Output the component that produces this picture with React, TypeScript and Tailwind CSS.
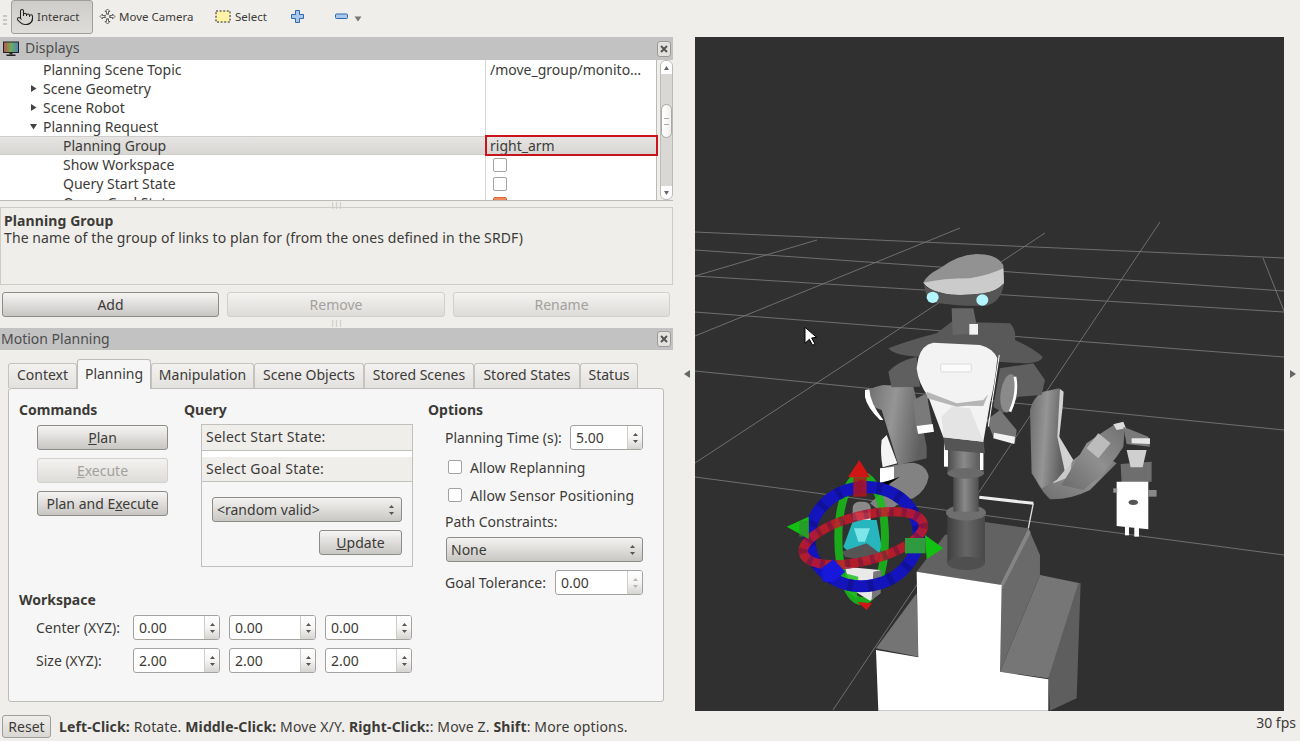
import React from "react";
import { Pointer } from "lucide-react";

const font = { fontFamily: '"Noto Sans", "Liberation Sans", sans-serif' };

function Arrows({ dim }: { dim?: boolean }) {
  const c = dim ? "#b5b5b5" : "#555";
  return (
    <svg width="7" height="12" viewBox="0 0 7 12" className="shrink-0">
      <polygon points="3.5,1 6,4 1,4" fill={c} />
      <polygon points="1,8 6,8 3.5,11" fill={c} />
    </svg>
  );
}

function Btn({ w, disabled, children }: { w: string; disabled?: boolean; children: React.ReactNode }) {
  return (
    <div
      className={`${w} h-[25px] rounded-[3px] border flex items-center justify-center text-[14px] shrink-0 ${
        disabled
          ? "border-[#d2d0cc] text-[#a3a19d] bg-gradient-to-b from-[#f4f3f1] to-[#dedcd9]"
          : "border-[#8d8c89] text-[#3c3b37] bg-gradient-to-b from-[#f6f5f4] to-[#c8c6c3]"
      }`}
    >
      {children}
    </div>
  );
}

function Spin({ w, v, dim }: { w: string; v: string; dim?: boolean }) {
  return (
    <div className={`${w} h-[25px] rounded-[3px] border border-[#a5a3a0] bg-white flex overflow-hidden shrink-0`}>
      <div className="flex-1 pl-[5px] text-[14px] leading-[23px] text-[#3c3b37]">{v}</div>
      <div className="w-[15px] border-l border-[#d0cecb] bg-gradient-to-b from-white via-[#f6f5f4] to-[#d6d4d1] flex items-center justify-center">
        <Arrows dim={dim} />
      </div>
    </div>
  );
}

function Combo({ w, v }: { w: string; v: string }) {
  return (
    <div className={`${w} h-[25px] rounded-[3px] border border-[#8d8c89] bg-gradient-to-b from-[#f4f3f1] to-[#c9c7c4] flex items-center justify-between pl-[4px] pr-[6px] text-[14px] text-[#3c3b37] shrink-0`}>
      <span>{v}</span>
      <Arrows />
    </div>
  );
}

function Check() {
  return <div className="w-[14px] h-[14px] rounded-[2px] border border-[#a5a3a0] bg-white shrink-0" />;
}

function Tri({ open }: { open?: boolean }) {
  return (
    <svg width="9" height="9" viewBox="0 0 9 9" className="shrink-0">
      {open ? <polygon points="1,2 8,2 4.5,7.5" fill="#444" /> : <polygon points="2,1 7.5,4.5 2,8" fill="#444" />}
    </svg>
  );
}

function CloseBtn() {
  return (
    <div className="w-[14px] h-[16px] rounded-[3px] border border-[#9c9a97] bg-[#e4e2df] flex items-center justify-center shrink-0">
      <svg width="8" height="8" viewBox="0 0 8 8">
        <path d="M1 1 L7 7 M7 1 L1 7" stroke="#555" strokeWidth="2" />
      </svg>
    </div>
  );
}

function Grip() {
  return <div className="flex justify-center text-[7px] leading-[7px] text-[#a9a7a3] tracking-[0px]">|||</div>;
}

const rows: { t: string; indent: string; tri?: "open" | "closed"; v?: React.ReactNode; sel?: boolean }[] = [
  { t: "Planning Scene Topic", indent: "pl-[43px]", v: "/move_group/monito…" },
  { t: "Scene Geometry", indent: "pl-[29px]", tri: "closed" },
  { t: "Scene Robot", indent: "pl-[29px]", tri: "closed" },
  { t: "Planning Request", indent: "pl-[29px]", tri: "open" },
  { t: "Planning Group", indent: "pl-[63px]", v: "right_arm", sel: true },
  { t: "Show Workspace", indent: "pl-[63px]", v: <Check /> },
  { t: "Query Start State", indent: "pl-[63px]", v: <Check /> },
  {
    t: "Query Goal State",
    indent: "pl-[63px]",
    v: (
      <div className="w-[14px] h-[14px] rounded-[2px] border border-[#d9663a] bg-[#f08a5d] shrink-0 mt-[2px]" />
    ),
  },
];

function Tree() {
  return (
    <div className="h-[141px] flex border-b border-[#bdbbb7] shrink-0 relative">
      <div className="w-[657px] h-[140px] bg-white border-r border-[#bdbbb7] overflow-hidden shrink-0">
        {rows.map((r) => (
          <div
            key={r.t}
            className={`h-[19px] flex text-[14px] leading-[19px] text-[#3c3b37] ${
              r.sel ? "bg-gradient-to-b from-[#e6e5e3] to-[#d8d6d3] border-y border-[#cfcdc9]" : ""
            }`}
          >
            <div className={`w-[486px] shrink-0 flex items-center border-r border-[#d6d6d6] ${r.indent}`}>
              {r.tri && (
                <span className="mr-[5px]">
                  <Tri open={r.tri === "open"} />
                </span>
              )}
              <span>{r.t}</span>
            </div>
            <div className={`flex-1 flex items-center ${typeof r.v === "string" ? "pl-[4px]" : "pl-[7px]"}`}>
              {r.v}
            </div>
          </div>
        ))}
      </div>
      <div className="absolute left-[485px] top-[75px] w-[173px] h-[21px] border-2 border-[#c9131d]" />
      <div className="w-[13px] ml-[3px] h-[140px] rounded-[6px] border border-[#bdbbb7] bg-[#dad8d5] flex flex-col items-center overflow-hidden shrink-0">
        <div className="h-[13px] w-full bg-white flex items-center justify-center shrink-0">
          <svg width="5" height="4" viewBox="0 0 5 4"><polygon points="2.5,0 5,4 0,4" fill="#666" /></svg>
        </div>
        <div className="h-[30px] shrink-0" />
        <div className="h-[34px] w-full rounded-[6px] border border-[#aaa8a5] bg-gradient-to-r from-white to-[#f0efed] shrink-0 flex items-center justify-center">
          <div className="w-[5px] h-[7px] border-y border-[#aaa] " />
        </div>
        <div className="flex-1" />
        <div className="h-[13px] w-full bg-white flex items-center justify-center shrink-0">
          <svg width="5" height="4" viewBox="0 0 5 4"><polygon points="0,0 5,0 2.5,4" fill="#666" /></svg>
        </div>
      </div>
    </div>
  );
}

function Tabs() {
  const tabs: [string, string][] = [
    ["Context", "w-[69px]"],
    ["Manipulation", "w-[103px]"],
    ["Scene Objects", "w-[110px]"],
    ["Stored Scenes", "w-[110px]"],
    ["Stored States", "w-[106px]"],
    ["Status", "w-[58px]"],
  ];
  const tab = (t: string, w: string) => (
    <div
      key={t}
      className={`${w} h-[25px] rounded-t-[3px] border border-b-0 border-[#c5c3bf] bg-gradient-to-b from-[#f3f2f0] to-[#e3e1de] flex items-center justify-center text-[14px] pb-[3px] text-[#3c3b37] shrink-0`}
    >
      {t}
    </div>
  );
  return (
    <div className="h-[29px] pl-[8px] flex items-end shrink-0 relative z-10">
      {tab(tabs[0][0], tabs[0][1])}
      <div className="w-[74px] h-[30px] -mb-[1px] rounded-t-[3px] border border-b-0 border-[#bdbbb7] bg-[#f6f6f6] flex items-center justify-center text-[14px] pb-[2px] text-[#3c3b37] shrink-0">
        Planning
      </div>
      {tabs.slice(1).map(([t, w]) => tab(t, w))}
    </div>
  );
}

function Heading({ children }: { children: React.ReactNode }) {
  return <div className="text-[14px] font-bold leading-[19px] text-[#3c3b37]">{children}</div>;
}

function Commands() {
  return (
    <div className="w-[165px] shrink-0 flex flex-col">
      <Heading>Commands</Heading>
      <div className="pl-[18px] pt-[6px] flex flex-col gap-[8px]">
        <Btn w="w-[131px]"><span><u>P</u>lan</span></Btn>
        <Btn w="w-[131px]" disabled><span><u>E</u>xecute</span></Btn>
        <Btn w="w-[131px]"><span>Plan and E<u>x</u>ecute</span></Btn>
      </div>
    </div>
  );
}

function Query() {
  return (
    <div className="w-[244px] shrink-0 flex flex-col">
      <Heading>Query</Heading>
      <div className="ml-[17px] mt-[5px] w-[212px] h-[143px] border border-[#c2c0bc] flex flex-col">
        <div className="h-[26px] border-b border-[#c2c0bc] bg-[#f0eeeb] pl-[4px] text-[14px] tracking-[0.25px] leading-[24px] text-[#3c3b37] shrink-0">Select Start State:</div>
        <div className="h-[6px] bg-white shrink-0" />
        <div className="h-[25px] border-b border-[#c2c0bc] bg-[#f0eeeb] pl-[4px] text-[14px] tracking-[0.25px] leading-[24px] text-[#3c3b37] shrink-0">Select Goal State:</div>
        <div className="pl-[10px] pt-[15px] flex flex-col gap-[8px]">
          <Combo w="w-[190px]" v="<random valid>" />
          <div className="flex justify-end w-[190px]">
            <Btn w="w-[83px]"><span><u>U</u>pdate</span></Btn>
          </div>
        </div>
      </div>
    </div>
  );
}

function Options() {
  const label = "text-[14px] text-[#3c3b37]";
  return (
    <div className="flex-1 flex flex-col">
      <Heading>Options</Heading>
      <div className="pl-[17px] flex flex-col">
        <div className="flex items-center justify-between w-[198px] mt-[6px]">
          <span className={label}>Planning Time (s):</span>
          <Spin w="w-[73px]" v="5.00" />
        </div>
        <div className="flex items-center gap-[8px] pl-[3px] mt-[7px] h-[20px]">
          <Check />
          <span className={`${label} tracking-[0.1px]`}>Allow Replanning</span>
        </div>
        <div className="flex items-center gap-[8px] pl-[3px] mt-[8px] h-[20px]">
          <Check />
          <span className={`${label} tracking-[0.1px]`}>Allow Sensor Positioning</span>
        </div>
        <div className={`${label} mt-[7px] leading-[20px]`}>Path Constraints:</div>
        <div className="mt-[5px]">
          <div className="w-[198px] ml-[1px]"><Combo w="w-[197px]" v="None" /></div>
        </div>
        <div className="flex items-center justify-between w-[198px] mt-[8px]">
          <span className={label}>Goal Tolerance:</span>
          <Spin w="w-[88px]" v="0.00" dim />
        </div>
      </div>
    </div>
  );
}

function Workspace() {
  const row = (t: string, v: string, mt: string) => (
    <div className={`flex items-center ${mt}`}>
      <div className="w-[114px] pl-[17px] text-[14px] text-[#3c3b37] shrink-0 whitespace-nowrap">{t}</div>
      <div className="flex gap-[9px]">
        <Spin w="w-[87px]" v={v} />
        <Spin w="w-[87px]" v={v} />
        <Spin w="w-[87px]" v={v} />
      </div>
    </div>
  );
  return (
    <div className="flex flex-col">
      <Heading>Workspace</Heading>
      {row("Center (XYZ):", "0.00", "mt-[6px]")}
      {row("Size (XYZ):", "2.00", "mt-[8px]")}
    </div>
  );
}

function Cylinder({ x, y, w, h, id }: { x: number; y: number; w: number; h: number; id: string }) {
  return <rect x={x} y={y} width={w} height={h} fill={`url(#${id})`} />;
}

function Scene() {
  const grid = [
    "695,232 1284,258",
    "695,250 1284,291",
    "695,276 1284,312",
    "695,312 1284,357",
    "695,371 1284,430",
    "695,477 1284,555",
    "695,276 817,240",
    "695,336 960,228",
    "695,463 1045,233",
    "833,710 1160,222",
    "1263,258 1284,311",
  ];
  return (
    <svg width="589" height="674" viewBox="695 37 589 674" className="block">
      <defs>
        <linearGradient id="cyl" x1="0" x2="1" y1="0" y2="0">
          <stop offset="0" stopColor="#4a4a4a" />
          <stop offset="0.45" stopColor="#8a8a8a" />
          <stop offset="1" stopColor="#4f4f4f" />
        </linearGradient>
        <linearGradient id="cyld" x1="0" x2="1" y1="0" y2="0">
          <stop offset="0" stopColor="#3e3e3e" />
          <stop offset="0.5" stopColor="#666" />
          <stop offset="1" stopColor="#484848" />
        </linearGradient>
        <linearGradient id="arm" x1="0" x2="1" y1="0" y2="0.2">
          <stop offset="0" stopColor="#6c6c6c" />
          <stop offset="0.5" stopColor="#959595" />
          <stop offset="1" stopColor="#5f5f5f" />
        </linearGradient>
        <linearGradient id="fore" x1="0" x2="1" y1="1" y2="0">
          <stop offset="0" stopColor="#6a6a6a" />
          <stop offset="0.5" stopColor="#8f8f8f" />
          <stop offset="1" stopColor="#707070" />
        </linearGradient>
      </defs>
      <rect x="695" y="37" width="589" height="674" fill="#303030" />
      {grid.map((g) => {
        const [a, b] = g.split(" ");
        const [x1, y1] = a.split(",");
        const [x2, y2] = b.split(",");
        return <line key={g} x1={x1} y1={y1} x2={x2} y2={y2} stroke="#767676" strokeWidth="0.9" />;
      })}

      {/* lower half: base, column, gripper, marker */}
      <g transform="translate(770 440) scale(0.3333)">
        <polygon points="810,405 930,430 925,530 835,715 690,695" fill="#767676" />
        <polygon points="925,430 932,430 920,775 840,812 835,715" fill="#5e5e5e" />
        <polygon points="690,435 775,265 810,345 810,405 690,695" fill="#6a6a6a" />
        <polygon points="440,395 525,285 640,245 775,265 690,435" fill="#626262" />
        <polygon points="690,435 775,265 782,278 697,445" fill="#858585" />
        <polygon points="318,625 440,460 445,650" fill="#747474" />
        <polygon points="440,395 695,435 690,695 835,718 835,812 325,812 318,630 445,652" fill="#ffffff" />
        <line x1="628" y1="172" x2="790" y2="190" stroke="#eee" strokeWidth="9" />
        <line x1="790" y1="190" x2="775" y2="265" stroke="#ddd" strokeWidth="4" />
        <Cylinder x={532} y={220} w={113} h={150} id="cyld" />
        <ellipse cx="588" cy="370" rx="56" ry="20" fill="#4f4f4f" />
        <ellipse cx="588" cy="218" rx="60" ry="24" fill="#6f6f6f" />
        <Cylinder x={550} y={100} w={76} h={115} id="cyl" />
        <Cylinder x={532} y={-10} w={110} h={110} id="cyl" />
        <ellipse cx="587" cy="100" rx="55" ry="16" fill="#6a6a6a" />
        <rect x="522" y="10" width="12" height="70" fill="#fff" />
        <rect x="630" y="15" width="10" height="75" fill="#fff" />

        {/* right elbow and forearm */}
        <path d="M785 85 Q790 60 820 50 L790 0 L870 0 L910 60 L960 20 L1040 70 L960 150 Q900 180 840 178 Q800 140 785 85Z" fill="url(#fore)" />
        <polygon points="870,30 905,65 900,110 850,130" fill="#c9c9c9" />

        {/* right gripper */}
        <polygon points="1052,72 1145,65 1145,125 1055,130" fill="#6e6e6e" />
        <polygon points="1040,125 1135,125 1135,268 1040,258" fill="#ffffff" />
        <polygon points="1030,145 1042,145 1042,158 1030,158" fill="#999" />
        <polygon points="1135,150 1160,150 1160,170 1135,170" fill="#888" />
        <ellipse cx="1090" cy="187" rx="14" ry="8" fill="#555" />
        <rect x="1065" y="258" width="12" height="28" fill="#fff" />
        <rect x="1093" y="262" width="14" height="28" fill="#fff" />

        {/* left forearm */}
        <path d="M330 90 Q370 70 430 68 Q470 75 476 110 Q470 150 430 175 Q390 180 345 225 L300 190 L360 135Z" fill="#828282" />
        <polygon points="330,85 372,80 372,118 330,128" fill="#fff" />
        <polygon points="335,130 390,110 345,140" fill="#000" />

        {/* marker */}
        <polygon points="220,320 250,240 320,240 335,320 320,360 230,330" fill="#27b6be" />
        <polygon points="252,265 300,265 285,305 265,305" fill="#7fe6e8" />
        <polygon points="215,335 290,310 330,340 310,368 225,350" fill="#555" />
        <rect x="248" y="185" width="54" height="55" rx="20" fill="#8a8a8a" />
        <rect x="248" y="218" width="54" height="22" fill="#e8e8e8" />
        <ellipse cx="275" cy="295" rx="70" ry="188" fill="none" stroke="#18c018" strokeWidth="24" opacity="0.85" />
        <polygon points="225,380 330,390 330,460 300,482 240,445" fill="#e9e9e9" />
        <polygon points="310,395 335,390 332,460 305,480" fill="#777" />
        <polygon points="225,400 265,410 260,475 225,450" fill="#22c022" opacity="0.85" />
        <g transform="rotate(-12 282 290)">
          <ellipse cx="282" cy="290" rx="165" ry="148" fill="none" stroke="#1414bc" strokeWidth="36" />
          <ellipse cx="282" cy="290" rx="165" ry="148" fill="none" stroke="#0d0d80" strokeWidth="36" strokeDasharray="16 46" opacity="0.55" />
        </g>
        <g transform="rotate(-14 280 295)" opacity="0.85">
          <ellipse cx="280" cy="295" rx="185" ry="68" fill="none" stroke="#c91a2a" strokeWidth="28" />
          <ellipse cx="280" cy="295" rx="185" ry="68" fill="none" stroke="#7a1040" strokeWidth="28" strokeDasharray="14 24" opacity="0.6" />
        </g>
        <polygon points="268,60 234,112 300,112" fill="#d01515" />
        <rect x="250" y="112" width="40" height="58" fill="#b8141c" opacity="0.8" />
        <polygon points="50,260 116,230 116,296" fill="#12c012" />
        <rect x="88" y="242" width="28" height="48" fill="#2f8f2f" opacity="0.7" />
        <polygon points="520,325 465,285 470,357" fill="#12c012" />
        <rect x="405" y="294" width="62" height="46" fill="#2f9a3f" />
        <polygon points="155,385 190,358 226,395 190,426 158,425" fill="#1818dd" />
        <polygon points="262,486 306,490 290,510" fill="#d01515" />
      </g>

      {/* upper half: head, torso, arms */}
      <g transform="translate(770 240) scale(0.3333)">
        {/* arms */}
        <path d="M285 470 Q285 445 340 435 L430 440 L445 500 L470 620 L470 655 L385 675 L335 510 Q300 500 285 470Z" fill="url(#arm)" />
        <path d="M285 450 L298 448 Q300 490 340 540 L330 540 Q290 500 285 470Z" fill="#fff" />
        <path d="M335 600 L350 585 L382 670 L338 682 Q330 640 335 600Z" fill="#f4f4f4" />
        <path d="M780 510 Q790 470 820 455 L868 445 L880 480 L865 580 L885 690 L860 720 L815 745 L785 700Z" fill="url(#arm)" />
        <path d="M870 447 L881 455 L878 500 L868 590 L910 660 L885 695 L862 590Z" fill="#d2d2d2" />
        <path d="M875 735 L950 610 L1000 575 L1040 550 L1065 560 L1060 620 L1040 650 L1000 700 L940 750Z" fill="url(#fore)" />
        <polygon points="950,625 985,580 1022,610 985,655" fill="#bcbcbc" />
        <polygon points="1030,553 1060,545 1068,565 1040,570" fill="#ddd" />
        <polygon points="1060,560 1135,590 1140,620 1070,612" fill="#7a7a7a" />
        <polygon points="1085,595 1140,595 1140,612 1085,610" fill="#e6e6e6" />
        <polygon points="1070,630 1130,630 1118,682 1082,682" fill="#cfcfcf" />

        {/* shoulders */}
        <path d="M355 325 Q420 300 500 280 L545 245 L720 250 Q740 270 735 300 Q790 325 818 350 Q815 368 760 370 L440 350 Q370 345 355 325Z" fill="#595959" />
        <path d="M355 395 Q380 365 440 350 L450 440 L365 442Z" fill="#5f5f5f" />
        <path d="M690 385 L790 370 L825 420 L815 465 L745 470 L700 520 L670 500Z" fill="#5f5f5f" />
        <ellipse cx="716" cy="460" rx="24" ry="58" fill="#8a8a8a" transform="rotate(8 716 460)" />
        <path d="M735 410 Q745 460 720 515" fill="none" stroke="#fff" strokeWidth="8" />
        <polygon points="430,480 470,460 490,575 440,580" fill="#7a7a7a" />
        <polygon points="440,558 488,552 492,575 445,582" fill="#fff" />
        <polygon points="650,540 690,510 740,570 735,610 670,590" fill="#767676" />
        <polygon points="672,578 735,590 733,612 670,595" fill="#f2f2f2" />

        {/* torso */}
        <polygon points="520,590 640,600 645,640 525,630" fill="#555" />
        <path d="M445 355 Q455 315 490 308 L630 315 Q670 325 682 355 Q675 430 660 490 L640 605 L520 592 L475 470 Q445 430 440 385Z" fill="#f3f3f3" />
        <polygon points="515,530 545,500 600,505 640,605 520,592" fill="#e4e4e4" />
        <polygon points="470,455 560,490 640,480 655,462 640,498 590,497 560,500 472,475" fill="#b5b5b5" />
        <rect x="512" y="372" width="92" height="24" rx="5" fill="#fbfbfb" stroke="#cfcfcf" strokeWidth="2" />
        <line x1="688" y1="345" x2="655" y2="560" stroke="#fff" strokeWidth="3" />

        {/* neck and head */}
        <polygon points="545,205 610,205 625,280 548,285" fill="#666" />
        <rect x="598" y="252" width="26" height="32" fill="#f2f2f2" />
        <path d="M460 128 Q470 105 510 85 Q560 45 620 42 Q680 42 700 75 L702 130 Q680 155 640 160 Q560 170 520 160 Q475 150 460 128Z" fill="#929292" />
        <path d="M460 128 Q520 115 600 115 Q660 105 700 85 L702 130 Q680 155 640 160 Q560 170 520 160 Q475 150 460 128Z" fill="#cbcbcb" />
        <path d="M462 135 Q470 175 480 185 Q560 200 650 197 Q695 185 702 130 Q680 155 640 160 Q560 170 520 160 Q475 150 462 135Z" fill="#555" />
        <ellipse cx="488" cy="172" rx="18" ry="17" fill="#b2f5fc" />
        <ellipse cx="637" cy="180" rx="18" ry="17" fill="#b2f5fc" />

        {/* cursor */}
        <path d="M105 262 L105 310 L118 298 L128 316 L135 312 L125 294 L140 292 Z" fill="#fff" stroke="#000" strokeWidth="3" />
      </g>
    </svg>
  );
}

export default function App() {
  return (
    <div style={font} className="w-[1300px] h-[741px] bg-[#f0eeeb] flex flex-col overflow-hidden text-[#3c3b37]">
      {/* toolbar */}
      <div className="h-[37px] flex items-start shrink-0 text-[11.5px]">
        <div className="w-[11px] pl-[3px] pt-[15px] shrink-0">
          <div className="w-[4px] h-[2px] bg-[#c9c7c3] mb-[2px]" />
          <div className="w-[4px] h-[2px] bg-[#c9c7c3] mb-[2px]" />
          <div className="w-[4px] h-[2px] bg-[#c9c7c3]" />
        </div>
        <div className="w-[82px] h-[34px] rounded-[3px] border border-[#a09e9b] bg-gradient-to-b from-[#cfcdca] to-[#dfddda] flex items-center pl-[4px] gap-[3px] shrink-0">
          <Pointer size={18} strokeWidth={1.4} color="#222" />
          <span>Interact</span>
        </div>
        <div className="h-[33px] flex items-center pl-[6px] gap-[3px] w-[116px] shrink-0">
          <svg width="17" height="17" viewBox="0 0 17 17" fill="none" stroke="#555" strokeWidth="0.9">
            <path d="M8.5 1 L11 3.5 H9.5 V6 H7.5 V3.5 H6 Z M8.5 16 L6 13.5 H7.5 V11 H9.5 V13.5 H11 Z M1 8.5 L3.5 6 V7.5 H6 V9.5 H3.5 V11 Z M16 8.5 L13.5 11 V9.5 H11 V7.5 H13.5 V6 Z" />
            <circle cx="8.5" cy="8.5" r="2.4" strokeDasharray="1.5 1" />
          </svg>
          <span>Move Camera</span>
        </div>
        <div className="h-[33px] flex items-center gap-[4px] w-[76px] pl-[6px] shrink-0">
          <svg width="16" height="14" viewBox="0 0 16 14">
            <rect x="1" y="1" width="14" height="11" fill="#fdf2a8" stroke="#222" strokeWidth="1" strokeDasharray="2 1.6" />
          </svg>
          <span>Select</span>
        </div>
        <div className="h-[33px] flex items-center w-[42px] pl-[6px] shrink-0">
          <svg width="13" height="13" viewBox="0 0 13 13">
            <path d="M4.5 0.5 H8.5 V4.5 H12.5 V8.5 H8.5 V12.5 H4.5 V8.5 H0.5 V4.5 H4.5 Z" fill="#a9c8ec" stroke="#2f69ae" />
          </svg>
        </div>
        <div className="h-[33px] flex items-center pl-[8px] gap-[6px] shrink-0">
          <svg width="13" height="7" viewBox="0 0 13 7">
            <rect x="0.5" y="1" width="12" height="4.5" rx="1" fill="#a9c8ec" stroke="#2f69ae" />
          </svg>
          <svg width="8" height="6" viewBox="0 0 8 6" className="mt-[4px]">
            <polygon points="0.5,0.5 7.5,0.5 4,5.5" fill="#777" />
          </svg>
        </div>
      </div>

      <div className="flex flex-1 min-h-0">
        {/* left column */}
        <div className="w-[673px] shrink-0 flex flex-col">
          <div className="h-[23px] bg-[#c2c2c2] flex items-center justify-between pl-[3px] pr-[2px] shrink-0">
            <div className="flex items-center gap-[6px] text-[14px] leading-[20px] pb-[2px] text-[#4d4d4d]">
              <svg width="16" height="16" viewBox="0 0 16 16" className="mt-[2px]">
                <defs>
                  <linearGradient id="mon" x1="0" x2="1" y1="0" y2="0">
                    <stop offset="0" stopColor="#c0504d" />
                    <stop offset="0.5" stopColor="#6cae5a" />
                    <stop offset="1" stopColor="#4f81bd" />
                  </linearGradient>
                </defs>
                <rect x="0.5" y="1" width="15" height="10.5" fill="url(#mon)" stroke="#222" />
                <rect x="6.5" y="11.5" width="3" height="2" fill="#222" />
                <rect x="3.5" y="13.5" width="9" height="1.5" fill="#222" />
              </svg>
              <span>Displays</span>
            </div>
            <CloseBtn />
          </div>
          <Tree />
          <div className="h-[6px] shrink-0 flex items-center justify-center"><Grip /></div>
          <div className="h-[78px] border border-[#cfccc7] px-[3px] pt-[4px] text-[14px] leading-[17px] tracking-[0.1px] shrink-0">
            <div className="font-bold">Planning Group</div>
            <div>The name of the group of links to plan for (from the ones defined in the SRDF)</div>
          </div>
          <div className="flex gap-[8px] pl-[2px] mt-[7px] shrink-0">
            <Btn w="w-[217px]">Add</Btn>
            <Btn w="w-[218px]" disabled>Remove</Btn>
            <Btn w="w-[217px]" disabled>Rename</Btn>
          </div>
          <div className="h-[11px] shrink-0 flex items-center justify-center"><Grip /></div>
          <div className="h-[22px] bg-[#c2c2c2] flex items-center justify-between pl-[1px] pr-[2px] text-[14px] shrink-0">
            <span className="text-[#4d4d4d] pb-[2px]">Motion Planning</span>
            <CloseBtn />
          </div>
          <div className="h-[9px] shrink-0" />
          <Tabs />
          <div className="ml-[8px] w-[656px] h-[314px] rounded-[3px] border border-[#bdbbb7] bg-[#f6f6f6] pl-[10px] pt-[11px] flex flex-col shrink-0">
            <div className="flex h-[190px] shrink-0">
              <Commands />
              <Query />
              <Options />
            </div>
            <Workspace />
          </div>
        </div>
        {/* splitter */}
        <div className="w-[22px] shrink-0 flex items-center justify-center pb-[1px] pl-[6px]">
          <svg width="6" height="8" viewBox="0 0 6 8"><polygon points="6,0 6,8 0,4" fill="#666" /></svg>
        </div>
        <div className="w-[589px] h-[674px] shrink-0">
          <Scene />
        </div>
        <div className="flex-1 flex items-center justify-end pr-[4px]">
          <svg width="6" height="8" viewBox="0 0 6 8"><polygon points="0,0 6,4 0,8" fill="#666" /></svg>
        </div>
      </div>

      {/* status bar */}
      <div className="h-[30px] flex items-center pl-[2px] pr-[4px] shrink-0">
        <div className="w-[49px] h-[23px] rounded-[3px] border border-[#a09e9b] bg-gradient-to-b from-[#efeeec] to-[#d9d7d4] flex items-center justify-center text-[14px] shrink-0">
          Reset
        </div>
        <div className="ml-[8px] text-[14px] tracking-[0.14px] whitespace-nowrap">
          <b>Left-Click:</b> Rotate. <b>Middle-Click:</b> Move X/Y. <b>Right-Click:</b>: Move Z. <b>Shift</b>: More options.
        </div>
        <div className="ml-auto self-start pt-[1px] text-[14px]">30 fps</div>
      </div>
    </div>
  );
}
